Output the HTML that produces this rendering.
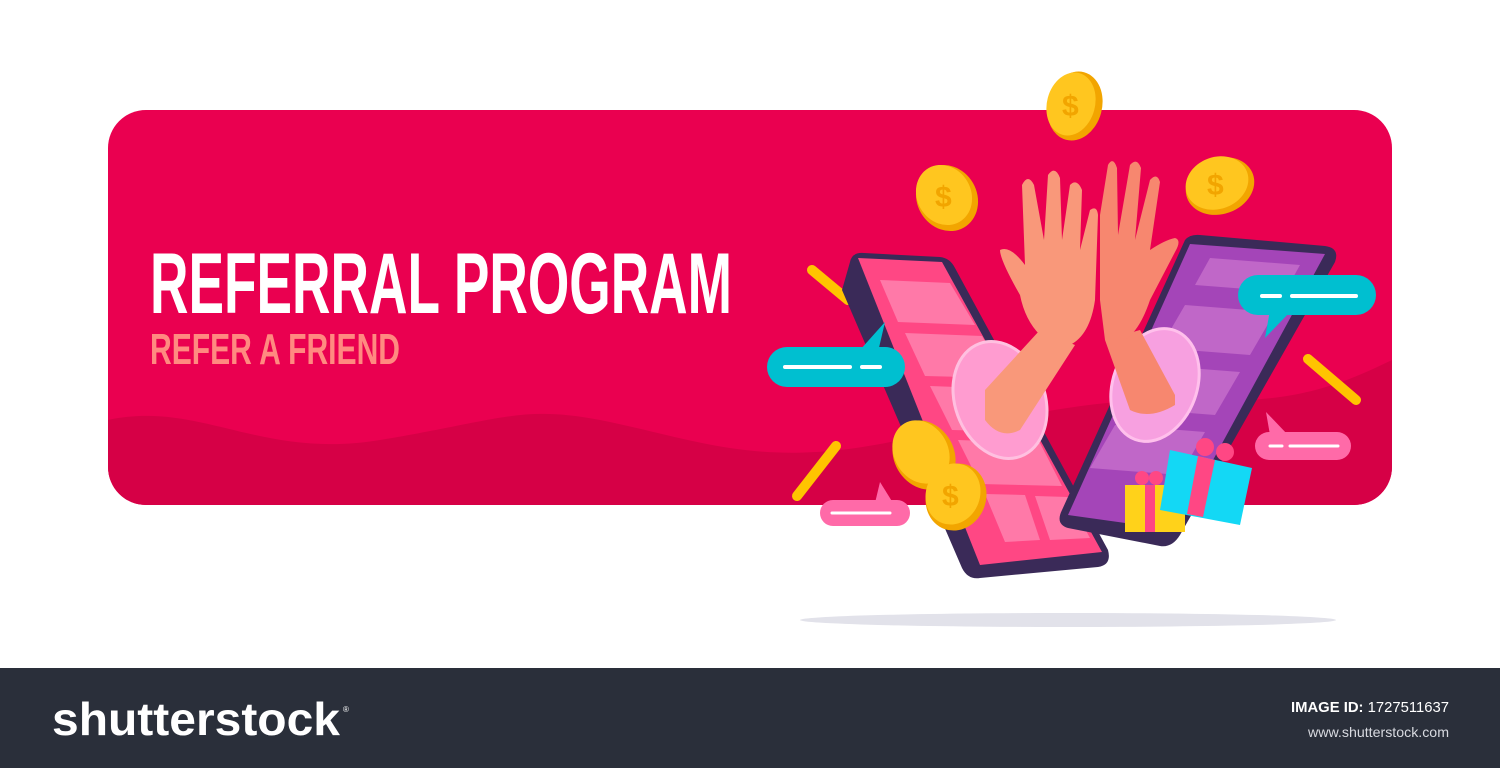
<!DOCTYPE html>
<html><head><meta charset="utf-8"><style>
html,body{margin:0;padding:0;width:1500px;height:768px;overflow:hidden;background:#fff;}
svg{display:block}
</style></head><body>
<svg width="1500" height="768" viewBox="0 0 1500 768" xmlns="http://www.w3.org/2000/svg">
<defs><clipPath id="card"><rect x="108" y="110" width="1284" height="395" rx="38"/></clipPath></defs>
<rect x="0" y="0" width="1500" height="668" fill="#fff"/>
<rect x="108" y="110" width="1284" height="395" rx="38" fill="#ea0050"/>
<g clip-path="url(#card)">
<path d="M108 420 C200 400 260 460 380 440 C500 420 520 405 600 420 C700 440 760 470 900 440 C1000 420 1100 395 1200 400 C1300 405 1350 380 1392 360 L1392 505 L108 505 Z" fill="#d60046"/>
</g>
<ellipse cx="1068" cy="620" rx="268" ry="7" fill="#e2e2ea"/>
<text x="150" y="313" font-family="'Liberation Sans Narrow','Liberation Sans',sans-serif" font-size="86" font-weight="bold" fill="#fff" textLength="582" lengthAdjust="spacingAndGlyphs">REFERRAL PROGRAM</text>
<text x="150" y="364" font-family="'Liberation Sans Narrow','Liberation Sans',sans-serif" font-size="44" font-weight="bold" fill="#ff8a80" textLength="250" lengthAdjust="spacingAndGlyphs">REFER A FRIEND</text>
<g stroke="#ffc400" stroke-width="10" stroke-linecap="round">
<line x1="812" y1="270" x2="848" y2="300"/>
<line x1="797" y1="496" x2="836" y2="446"/>
<line x1="1308" y1="359" x2="1356" y2="400"/>
</g>
<path d="M850 262 Q852 252 864 253 L940 257 Q950 258 955 268 L1108 550 Q1112 565 1098 567 L980 578 Q968 580 962 568 L842 290 Z" fill="#3a2a58"/>
<path d="M858 258 L942 262 L1102 552 L980 565 Z" fill="#ff4784"/>
<g fill="#ff79a8">
<path d="M880 280 L950 283 L975 325 L898 322 Z"/>
<path d="M905 333 L982 336 L1005 378 L925 376 Z"/>
<path d="M930 386 L1010 389 L1035 432 L952 430 Z"/>
<path d="M958 440 L1040 443 L1062 486 L980 484 Z"/>
<path d="M985 494 L1025 495 L1040 540 L1005 542 Z"/>
<path d="M1035 496 L1068 497 L1090 538 L1050 540 Z"/>
</g>
<ellipse cx="1000" cy="400" rx="45" ry="60" fill="#ff9cd0" stroke="#ffc0e0" stroke-width="3" transform="rotate(-20 1000 400)"/>
<path d="M1185 240 Q1190 234 1200 235 L1325 246 Q1340 248 1335 262 L1180 535 Q1172 548 1160 546 L1068 528 Q1055 524 1062 510 Z" fill="#3a2a58"/>
<path d="M1190 244 L1325 254 L1175 530 L1068 515 Z" fill="#a445b8"/>
<g fill="#c067c8">
<path d="M1210 258 L1300 265 L1285 292 L1195 285 Z"/>
<path d="M1185 305 L1275 312 L1250 355 L1160 348 Z"/>
<path d="M1150 365 L1240 372 L1215 415 L1125 408 Z"/>
<path d="M1115 425 L1205 432 L1180 475 L1090 468 Z"/>
</g>
<ellipse cx="1155" cy="385" rx="42" ry="58" fill="#f7a0e0" stroke="#ffc0ec" stroke-width="3" transform="rotate(20 1155 385)"/>
<path d="M985 390 L1040 330 L1075 345 L1020 430 Q1000 440 985 420 Z" fill="#f9987a"/>
<path d="M1020 295 Q1000 260 1000 250 Q1010 245 1025 265 L1022 185 Q1028 173 1034 185 L1044 240 L1048 175 Q1055 165 1060 178 L1062 240 L1070 185 Q1077 178 1082 190 L1080 250 L1090 210 Q1097 205 1098 215 L1095 300 Q1090 335 1070 345 L1040 335 Q1025 320 1020 295 Z" fill="#f9987a"/>
<path d="M1175 395 L1140 330 L1105 340 L1130 410 Q1150 420 1175 405 Z" fill="#f7876f"/>
<path d="M1100 300 L1100 215 L1108 165 Q1113 156 1117 168 L1118 235 L1130 165 Q1137 157 1141 168 L1135 240 L1150 180 Q1157 172 1160 182 L1150 250 Q1165 240 1175 238 Q1182 240 1175 252 L1150 300 Q1140 330 1125 340 L1105 340 Z" fill="#f7876f"/>
<g>
<ellipse cx="1075" cy="106" rx="27" ry="35" fill="#f2a500" transform="rotate(15 1075 106)"/>
<ellipse cx="1071" cy="104" rx="24" ry="32" fill="#ffc61f" transform="rotate(15 1071 104)"/>
<text x="1062" y="116" font-family="'Liberation Sans',sans-serif" font-weight="bold" font-size="30" fill="#f2a500">$</text>
<ellipse cx="947" cy="198" rx="30" ry="34" fill="#f2a500" transform="rotate(-30 947 198)"/>
<ellipse cx="944" cy="195" rx="27" ry="31" fill="#ffc61f" transform="rotate(-30 944 195)"/>
<text x="935" y="207" font-family="'Liberation Sans',sans-serif" font-weight="bold" font-size="30" fill="#f2a500">$</text>
<ellipse cx="1220" cy="186" rx="35" ry="28" fill="#f2a500" transform="rotate(-20 1220 186)"/>
<ellipse cx="1217" cy="183" rx="32" ry="26" fill="#ffc61f" transform="rotate(-20 1217 183)"/>
<text x="1207" y="195" font-family="'Liberation Sans',sans-serif" font-weight="bold" font-size="30" fill="#f2a500">$</text>
<ellipse cx="924" cy="455" rx="30" ry="36" fill="#f2a500" transform="rotate(-30 924 455)"/>
<ellipse cx="921" cy="452" rx="27" ry="33" fill="#ffc61f" transform="rotate(-30 921 452)"/>
<ellipse cx="956" cy="497" rx="30" ry="34" fill="#f2a500" transform="rotate(20 956 497)"/>
<ellipse cx="953" cy="494" rx="27" ry="31" fill="#ffc61f" transform="rotate(20 953 494)"/>
<text x="942" y="506" font-family="'Liberation Sans',sans-serif" font-weight="bold" font-size="30" fill="#f2a500">$</text>
</g>
<rect x="1125" y="485" width="60" height="47" fill="#ffd21a"/>
<rect x="1145" y="485" width="10" height="47" fill="#ff4784"/>
<circle cx="1142" cy="478" r="7" fill="#ff4784"/><circle cx="1156" cy="478" r="7" fill="#ff4784"/>
<path d="M1170 450 L1252 468 L1240 525 L1160 510 Z" fill="#13d8f5"/>
<path d="M1198 456 L1215 460 L1203 517 L1187 514 Z" fill="#ff4784"/>
<circle cx="1205" cy="447" r="9" fill="#ff4784"/><circle cx="1225" cy="452" r="9" fill="#ff4784"/>
<rect x="767" y="347" width="138" height="40" rx="20" fill="#00bfd0"/>
<path d="M860 350 L885 322 L878 352 Z" fill="#00bfd0"/>
<g stroke="#fff" stroke-width="4" stroke-linecap="round"><line x1="785" y1="367" x2="850" y2="367"/><line x1="862" y1="367" x2="880" y2="367"/></g>
<rect x="1238" y="275" width="138" height="40" rx="20" fill="#00bfd0"/>
<path d="M1270 310 L1265 338 L1290 312 Z" fill="#00bfd0"/>
<g stroke="#fff" stroke-width="4" stroke-linecap="round"><line x1="1262" y1="296" x2="1280" y2="296"/><line x1="1292" y1="296" x2="1356" y2="296"/></g>
<rect x="1255" y="432" width="96" height="28" rx="14" fill="#ff6aa8"/>
<path d="M1270 435 L1266 412 L1288 435 Z" fill="#ff6aa8"/>
<g stroke="#fff" stroke-width="3" stroke-linecap="round"><line x1="1270" y1="446" x2="1282" y2="446"/><line x1="1290" y1="446" x2="1338" y2="446"/></g>
<rect x="820" y="500" width="90" height="26" rx="13" fill="#ff6aa8"/>
<path d="M875 503 L880 482 L893 503 Z" fill="#ff6aa8"/>
<g stroke="#fff" stroke-width="3" stroke-linecap="round"><line x1="832" y1="513" x2="890" y2="513"/></g>
<rect x="0" y="668" width="1500" height="100" fill="#2a2f3a"/>
<text x="52" y="735" font-family="'Liberation Sans',sans-serif" font-weight="bold" font-size="46" fill="#fff" textLength="288" lengthAdjust="spacingAndGlyphs">shutterstock</text>
<text x="343" y="712" font-family="'Liberation Sans',sans-serif" font-size="8" fill="#fff">®</text>
<text x="1449" y="712" text-anchor="end" font-family="'Liberation Sans Narrow','Liberation Sans',sans-serif" font-size="15" fill="#fff" textLength="158" lengthAdjust="spacingAndGlyphs"><tspan font-weight="bold">IMAGE ID:</tspan> 1727511637</text>
<text x="1449" y="737" text-anchor="end" font-family="'Liberation Sans Narrow','Liberation Sans',sans-serif" font-size="14" fill="#d8dae0" textLength="141" lengthAdjust="spacingAndGlyphs">www.shutterstock.com</text>
</svg>
</body></html>
